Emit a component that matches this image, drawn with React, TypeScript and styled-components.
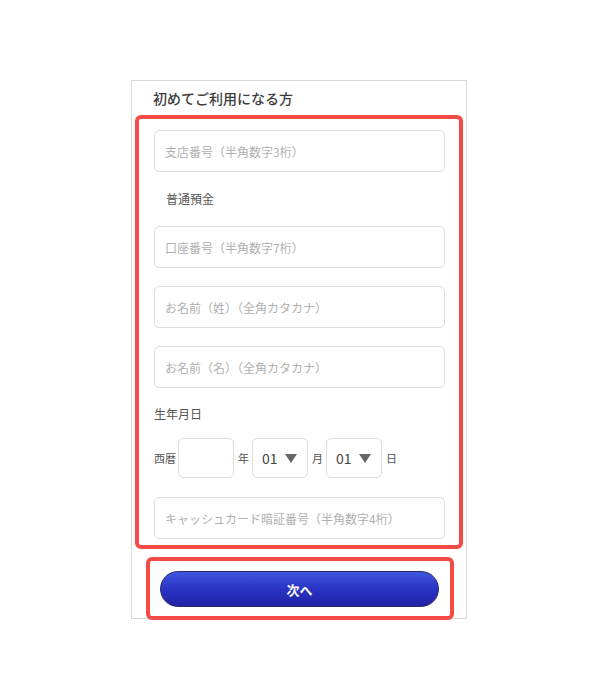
import React from 'react';
import styled, { createGlobalStyle } from 'styled-components';

const GlobalStyle = createGlobalStyle`
  body {
    margin: 0;
    background: #ffffff;
    font-family: "Noto Sans CJK JP", "Noto Sans", sans-serif;
  }
`;

const Page = styled.div`
  width: 600px;
  height: 700px;
  padding-top: 80px;
  box-sizing: border-box;
`;

const Frame = styled.div`
  margin-left: 131px;
  width: 336px;
  height: 539px;
  box-sizing: border-box;
  border: 1px solid #d8d8d8;
  display: flex;
  flex-direction: column;
`;

const Heading = styled.div`
  height: 34px;
  padding-left: 21px;
  display: flex;
  align-items: center;
  font-size: 14px;
  font-weight: 500;
  color: #3c3c3c;
`;

const Highlight = styled.div<{ $left: number; $width: number }>`
  margin-left: ${p => p.$left}px;
  width: ${p => p.$width}px;
  box-sizing: border-box;
  border: 4px solid #f44b47;
  border-radius: 6px;
`;

const FormBox = styled(Highlight)`
  height: 434px;
  padding: 11px 14px 0 15px;
  display: flex;
  flex-direction: column;
`;

const ButtonBox = styled(Highlight)`
  margin-top: 8px;
  height: 63px;
  padding: 10px 0 0 10px;
  margin-bottom: -2px;
`;

const Field = styled.div<{ $mt?: number }>`
  margin-top: ${p => p.$mt ?? 0}px;
  height: 42px;
  box-sizing: border-box;
  border: 1px solid #dedede;
  border-radius: 5px;
  padding-left: 10px;
  display: flex;
  align-items: center;
  font-size: 12px;
  color: #b0b0b0;
`;

const Label = styled.div<{ $mt: number; $indent?: number }>`
  margin-top: ${p => p.$mt}px;
  padding-left: ${p => p.$indent ?? 0}px;
  height: 18px;
  line-height: 18px;
  font-size: 12px;
  color: #555;
`;

const DateRow = styled.div`
  margin-top: 15px;
  height: 40px;
  display: flex;
  align-items: center;
`;

const DateText = styled.span<{ $ml: number; $mr: number }>`
  margin-left: ${p => p.$ml}px;
  margin-right: ${p => p.$mr}px;
  font-size: 11px;
  color: #555;
`;

const Box = styled.div`
  width: 56px;
  height: 40px;
  box-sizing: border-box;
  border: 1px solid #dedede;
  border-radius: 5px;
`;

const Select = styled(Box)`
  padding: 0 10px 0 9px;
  display: flex;
  align-items: center;
  justify-content: space-between;
  font-size: 14px;
  color: #444;
`;

const Caret = styled.span`
  width: 0;
  height: 0;
  border-left: 6px solid transparent;
  border-right: 6px solid transparent;
  border-top: 9px solid #666;
`;

const NextButton = styled.button`
  width: 279px;
  height: 36px;
  border: 1px solid #2b2768;
  border-radius: 18px;
  background: linear-gradient(#4057df, #2a33c4 50%, #1f22a6);
  color: #ffffff;
  font-family: "Noto Sans CJK JP", "Noto Sans", sans-serif;
  font-size: 13px;
  font-weight: 700;
  padding: 0;
`;

export default function App() {
  return (
    <Page>
      <GlobalStyle />
      <Frame>
        <Heading>初めてご利用になる方</Heading>
        <FormBox $left={3} $width={328}>
          <Field>支店番号（半角数字3桁）</Field>
          <Label $mt={18} $indent={12}>普通預金</Label>
          <Field $mt={18}>口座番号（半角数字7桁）</Field>
          <Field $mt={18}>お名前（姓）（全角カタカナ）</Field>
          <Field $mt={18}>お名前（名）（全角カタカナ）</Field>
          <Label $mt={17}>生年月日</Label>
          <DateRow>
            <DateText $ml={0} $mr={2}>西暦</DateText>
            <Box />
            <DateText $ml={4} $mr={3}>年</DateText>
            <Select>01<Caret /></Select>
            <DateText $ml={4} $mr={3}>月</DateText>
            <Select>01<Caret /></Select>
            <DateText $ml={4} $mr={0}>日</DateText>
          </DateRow>
          <Field $mt={19}>キャッシュカード暗証番号（半角数字4桁）</Field>
        </FormBox>
        <ButtonBox $left={14} $width={308}>
          <NextButton>次へ</NextButton>
        </ButtonBox>
      </Frame>
    </Page>
  );
}
